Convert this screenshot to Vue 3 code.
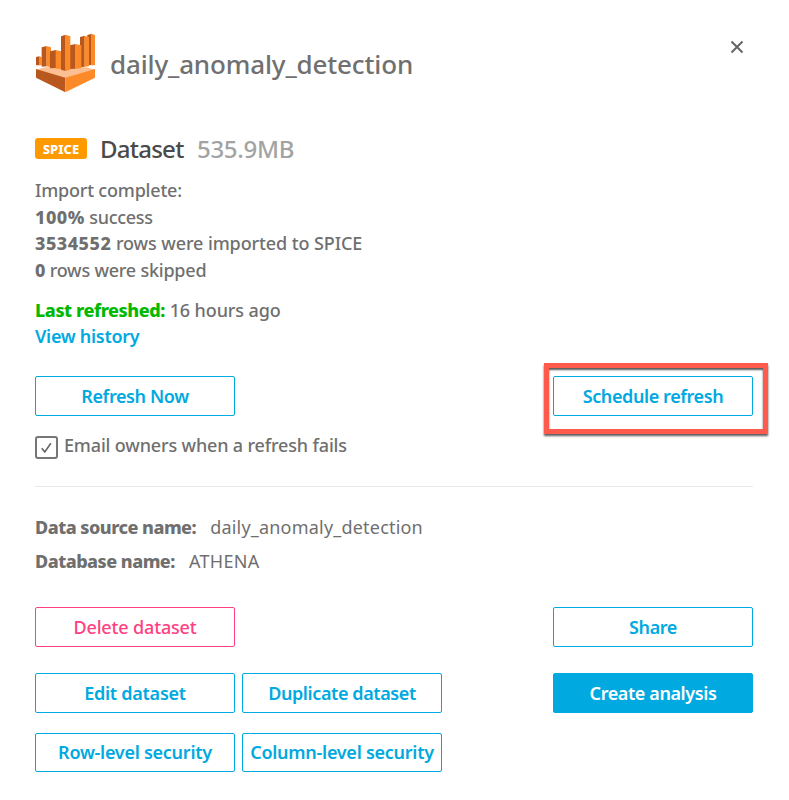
<script setup>
const importLines = [
  { strong: '', text: 'Import complete:', cls: 'l-import' },
  { strong: '100%', text: 'success', cls: 'l-success' },
  { strong: '3534552', text: 'rows were imported to SPICE', cls: 'l-rows' },
  { strong: '0', text: 'rows were skipped', cls: 'l-skip' },
]
</script>

<template>
  <main class="panel">
    <header class="head">
      <svg class="logo" viewBox="30 24 183 180" aria-hidden="true">
        <path fill="#fcbf92" d="M33 134 60 127H185L210 134 121 160Z" />
        <path fill="#b9581e" d="M33 132 121 158V202L33 158Z" />
        <path fill="#fd8a29" d="M210 132 121 158V202L210 158Z" />
        <path fill="#b9581e" d="M33 96 43 94V121L33 121Z" />
        <path fill="#fd8a29" d="M42 94 50 96V121L42 121Z" />
        <path fill="#b9581e" d="M50 67 65 63V124L50 125Z" />
        <path fill="#fd8a29" d="M64 63 78 67V127L64 124Z" />
        <path fill="#b9581e" d="M75 79 93 75V129L75 130Z" />
        <path fill="#fd8a29" d="M92 75 109 79V132L92 131Z" />
        <path fill="#b9581e" d="M187 30 200 26V120L187 121Z" />
        <path fill="#fd8a29" d="M199 26 210 30V121L199 121Z" />
        <path fill="#b9581e" d="M165 36 179 32V125L165 127Z" />
        <path fill="#fd8a29" d="M178 32 192 36V124L178 125Z" />
        <path fill="#b9581e" d="M135 61 151 57V131L135 132Z" />
        <path fill="#fd8a29" d="M150 57 169 61V130L150 131Z" />
        <path fill="#b9581e" d="M108 34 122 29V138L108 134Z" />
        <path fill="#fd8a29" d="M121 29 136 34V134L121 138Z" />
      </svg>
      <h1 class="title">daily_anomaly_detection</h1>
      <button class="close" aria-label="Close">
        <svg viewBox="0 0 14 14"><path d="M1.5 1.5 12.5 12.5M12.5 1.5 1.5 12.5" /></svg>
      </button>
    </header>

    <section class="kind">
      <span class="tag">SPICE</span>
      <span class="kind-name">Dataset</span>
      <span class="kind-size">535.9MB</span>
    </section>

    <section class="status">
      <p v-for="line in importLines" :key="line.text" :class="line.cls">
        <b v-if="line.strong">{{ line.strong }}</b> {{ line.text }}
      </p>
    </section>

    <section class="refreshed">
      <p><b class="green">Last refreshed:</b> <span class="ago">16 hours ago</span></p>
      <p><a class="link">View history</a></p>
    </section>

    <section class="row refresh-row">
      <button class="btn b-now">Refresh Now</button>
      <div class="marked">
        <button class="btn b-schedule">Schedule refresh</button>
        <span class="marker"></span>
      </div>
    </section>

    <label class="check">
      <span class="box">
        <svg viewBox="0 0 20 20"><path d="M5 10.8 8.2 14.6 14.6 5.6" /></svg>
      </span>
      <span class="check-text">Email owners when a refresh fails</span>
    </label>

    <dl class="source">
      <div><dt class="t-source">Data source name:</dt><dd class="d-source">daily_anomaly_detection</dd></div>
      <div><dt class="t-db">Database name:</dt><dd class="d-db">ATHENA</dd></div>
    </dl>

    <section class="row actions first">
      <button class="btn danger b-delete">Delete dataset</button>
      <button class="btn b-share end">Share</button>
    </section>
    <section class="row actions second">
      <button class="btn b-edit">Edit dataset</button>
      <button class="btn b-dup">Duplicate dataset</button>
      <button class="btn primary b-create end">Create analysis</button>
    </section>
    <section class="row actions">
      <button class="btn short b-row">Row-level security</button>
      <button class="btn short b-col">Column-level security</button>
    </section>
  </main>
</template>

<style>
body { background: #fff; }
</style>

<style scoped>
.panel {
  box-sizing: border-box;
  width: 789px;
  height: 800px;
  padding: 33px 36px 0 35px;
  overflow: hidden;
  background: #fff;
  color: #6f6f6f;
  font: 500 18px/27px "Noto Sans", sans-serif;
  white-space: nowrap;
}
p, dl, dd, h1 { margin: 0; }
b { font-weight: 800; }
button { font-family: inherit; padding: 0; }
.head { display: flex; height: 105px; align-items: flex-start; }
.logo { width: 61px; height: 60px; flex: none; }
.title { margin-left: 14px; padding-top: 13px; font-size: 26px; line-height: 36px; font-weight: 500; letter-spacing: -0.15px; color: #707070; }
.close { margin: 7px 9px 0 auto; width: 14px; height: 14px; border: 0; background: none; }
.close svg { display: block; width: 14px; height: 14px; fill: none; stroke: #666; stroke-width: 2; }

.kind { display: flex; align-items: flex-start; height: 39px; }
.tag { width: 52px; height: 21px; border-radius: 3px; background: #ff9900; color: #fff; text-align: center; font-size: 13px; line-height: 22px; font-weight: 800; }
.kind-name, .kind-size { font-size: 24px; line-height: 24px; margin-top: -1px; }
.kind-name { margin-left: 13px; width: 97px; color: #4a4a4a; letter-spacing: -0.75px; }
.kind-size { color: #a3a3a3; letter-spacing: -0.3px; font-weight: 500; }

.status { height: 120px; }
.status p { height: 26.6px; }
.l-import { letter-spacing: -0.2px; }
.l-success { letter-spacing: -0.3px; }
.l-success b { letter-spacing: 0.5px; }
.l-rows { letter-spacing: -0.1px; }
.l-rows b { letter-spacing: 0.5px; }
.l-skip { letter-spacing: -0.22px; }
.refreshed { height: 79px; }
.refreshed p { height: 26px; }
.green { color: #00b900; letter-spacing: -0.43px; }
.ago { letter-spacing: -0.12px; }
.link { color: #00a9e0; font-weight: 600; letter-spacing: -0.28px; }

.row { display: flex; gap: 7px; }
.refresh-row { justify-content: space-between; height: 59px; }
.marked { position: relative; }
.marker {
  position: absolute;
  left: -9px;
  top: -13px;
  box-sizing: border-box;
  width: 224px;
  height: 71px;
  border: 5px solid #ff5b4d;
  box-shadow: 0 2px 2px rgba(0, 0, 0, .65), inset 0 2px 2px rgba(0, 0, 0, .65);
  pointer-events: none;
}
.btn { box-sizing: border-box; width: 200px; height: 40px; border: 1px solid #00a9e0; border-radius: 2px; background: #fff; color: #00a9e0; font-size: 18px; line-height: 38px; font-weight: 600; letter-spacing: -0.4px; white-space: nowrap; }
.b-edit, .b-row, .b-col { letter-spacing: -0.26px; }
.short { height: 39px; line-height: 37px; }
.danger { border-color: #ff4081; color: #ff4081; font-weight: 500; letter-spacing: -0.15px; }
.primary { background: #00a9e0; color: #fff; }
.end { margin-left: auto; }

.check { display: flex; height: 51px; border-bottom: 1px solid #eaeaea; }
.box { box-sizing: border-box; width: 23px; height: 23px; margin-top: .5px; border: 2px solid #767676; border-radius: 3px; }
.box svg { display: block; width: 19px; height: 19px; fill: none; stroke: #666; stroke-width: 1.7; }
.check-text { margin: -3px 0 0 6px; letter-spacing: -0.16px; }

.source { padding-top: 27px; height: 93px; }
.source div { display: flex; height: 34px; }
dt { font-weight: 800; letter-spacing: -0.51px; }
dd { margin-left: 14px; font-weight: 450; }
.d-source { letter-spacing: 0.2px; }
.d-db { letter-spacing: 0.3px; }
.first { height: 66px; }
.second { height: 60px; }
</style>
